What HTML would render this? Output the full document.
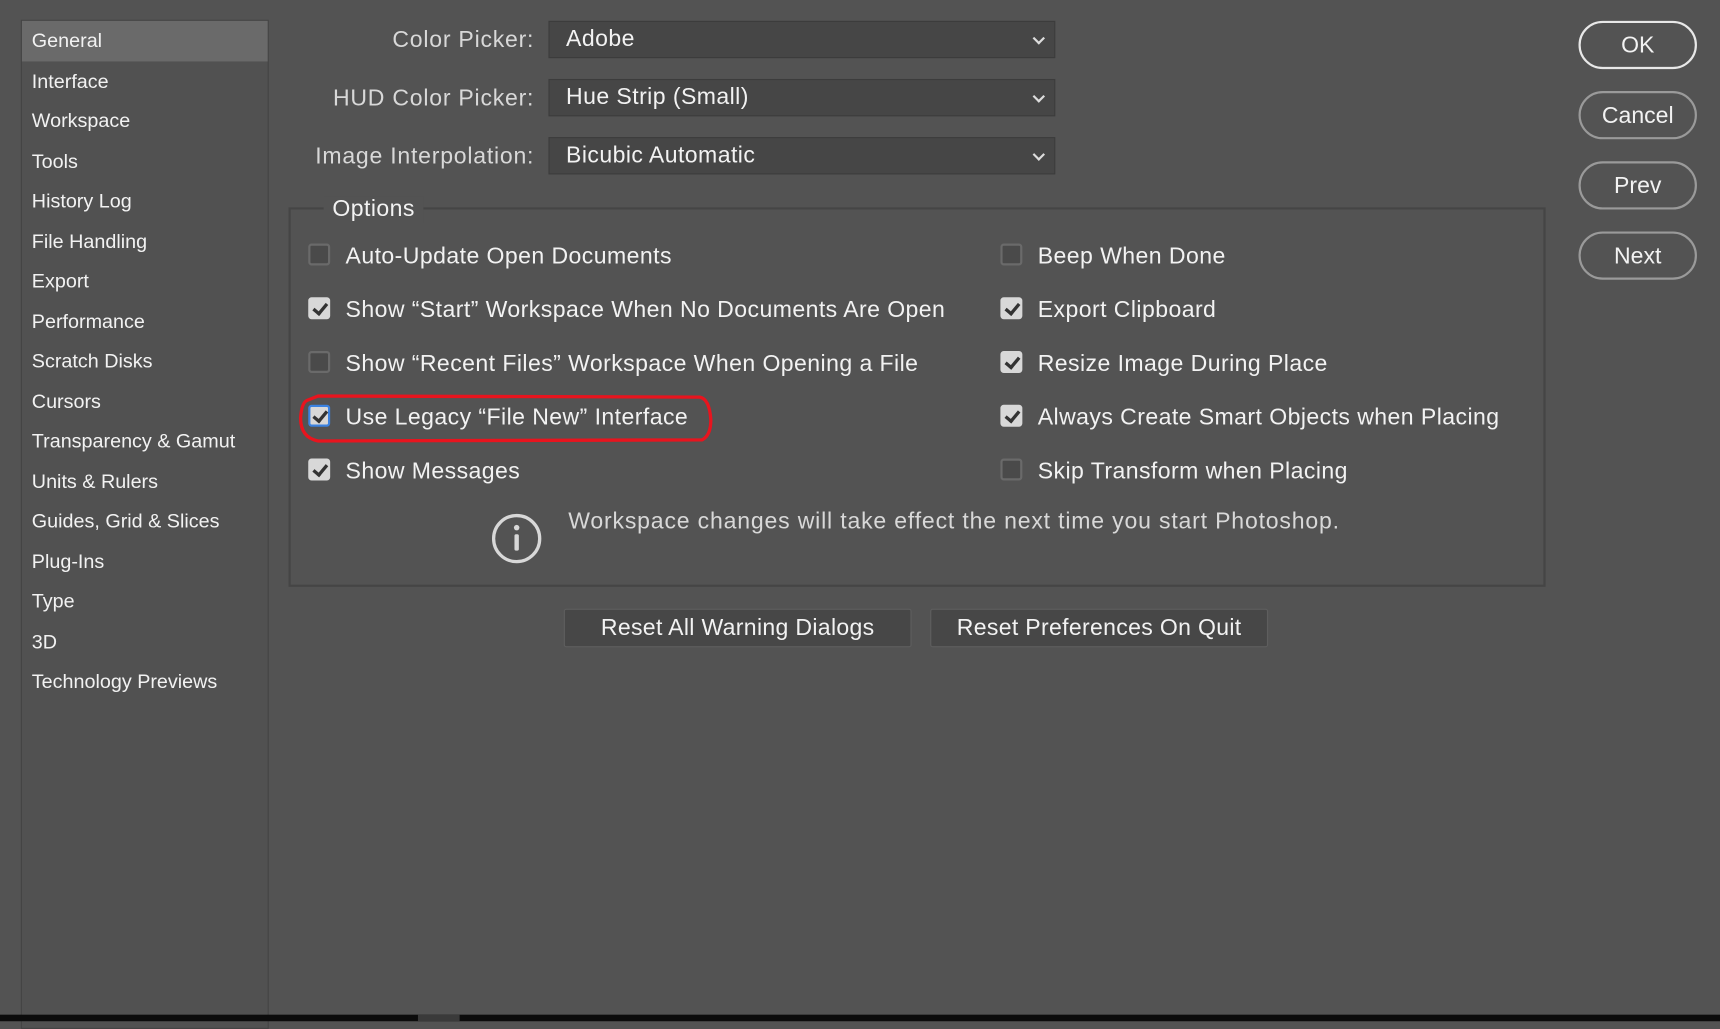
<!DOCTYPE html>
<html><head><style>
html,body{margin:0;padding:0;width:1720px;height:1020px;overflow:hidden;background:#535353;}
#w{position:absolute;left:0;top:0;width:1568px;height:930px;transform:scale(1.09694);transform-origin:0 0;font-family:"Liberation Sans",sans-serif;color:#f0f0f0;}
.a{position:absolute;white-space:nowrap;}
.side{position:absolute;left:19px;top:18px;width:226px;height:920px;background:#515151;border:1px solid #444;box-sizing:border-box;}
.side div{height:36.5px;line-height:36px;padding-left:9px;font-size:18px;color:#f2f2f2;}
.side .sel{background:#6a6a6a;}
.lbl{font-size:21px;color:#d8d8d8;text-align:right;width:230px;letter-spacing:0.7px;}
.dd{position:absolute;left:500px;width:462px;height:34px;background:#464646;border:1px solid #3c3c3c;box-sizing:border-box;font-size:21px;line-height:32px;padding-left:15px;color:#f2f2f2;letter-spacing:0.4px;}
.dd:after{content:"";position:absolute;right:10px;top:11px;width:6px;height:6px;border-right:2px solid #ddd;border-bottom:2px solid #ddd;transform:rotate(45deg);}
.cb{position:absolute;width:20px;height:20px;border:2px solid #6a6a6a;border-radius:3px;box-sizing:border-box;background:#4a4a4a;}
.cb.on{background:#d8d8d8;border-color:#d8d8d8;}
.cb.on:after{content:"";position:absolute;left:5px;top:1px;width:5px;height:10px;border-right:3px solid #333;border-bottom:3px solid #333;transform:rotate(40deg);}
.cb.blue{border-color:#3b82e0;}
.t{font-size:21px;color:#f2f2f2;letter-spacing:0.4px;}
.btn{position:absolute;border:2px solid #9a9a9a;border-radius:22px;width:108px;height:44px;box-sizing:border-box;text-align:center;line-height:42px;font-size:21px;color:#f2f2f2;}
.rb{position:absolute;top:555px;height:35px;background:#474747;border:1px solid #5e5e5e;border-radius:2px;box-sizing:border-box;font-size:21px;line-height:33px;text-align:center;color:#f2f2f2;letter-spacing:0.3px;}
</style></head><body><div id="w">
<div class="side">
<div class="sel">General</div><div>Interface</div><div>Workspace</div><div>Tools</div><div>History Log</div><div>File Handling</div><div>Export</div><div>Performance</div><div>Scratch Disks</div><div>Cursors</div><div>Transparency &amp; Gamut</div><div>Units &amp; Rulers</div><div>Guides, Grid &amp; Slices</div><div>Plug-Ins</div><div>Type</div><div>3D</div><div>Technology Previews</div>
</div>
<div class="a lbl" style="left:257px;top:25px">Color Picker:</div>
<div class="a lbl" style="left:257px;top:78px">HUD Color Picker:</div>
<div class="a lbl" style="left:257px;top:131px">Image Interpolation:</div>
<div class="dd" style="top:19px">Adobe</div>
<div class="dd" style="top:72px">Hue Strip (Small)</div>
<div class="dd" style="top:125px">Bicubic Automatic</div>
<div class="a" style="left:263px;top:189px;width:1146px;height:346px;border:2px solid #454545;box-sizing:border-box;"></div>
<div class="a t" style="left:295px;top:179px;background:#535353;padding:0 8px;">Options</div>

<div class="cb" style="left:281px;top:222px"></div><div class="a t" style="left:315px;top:222px">Auto-Update Open Documents</div>
<div class="cb on" style="left:281px;top:271px"></div><div class="a t" style="left:315px;top:271px">Show “Start” Workspace When No Documents Are Open</div>
<div class="cb" style="left:281px;top:320px"></div><div class="a t" style="left:315px;top:320px">Show “Recent Files” Workspace When Opening a File</div>
<div class="cb on blue" style="left:281px;top:369px"></div><div class="a t" style="left:315px;top:369px">Use Legacy “File New” Interface</div>
<div class="cb on" style="left:281px;top:418px"></div><div class="a t" style="left:315px;top:418px">Show Messages</div>

<div class="cb" style="left:912px;top:222px"></div><div class="a t" style="left:946px;top:222px">Beep When Done</div>
<div class="cb on" style="left:912px;top:271px"></div><div class="a t" style="left:946px;top:271px">Export Clipboard</div>
<div class="cb on" style="left:912px;top:320px"></div><div class="a t" style="left:946px;top:320px">Resize Image During Place</div>
<div class="cb on" style="left:912px;top:369px"></div><div class="a t" style="left:946px;top:369px">Always Create Smart Objects when Placing</div>
<div class="cb" style="left:912px;top:418px"></div><div class="a t" style="left:946px;top:418px">Skip Transform when Placing</div>

<svg class="a" style="left:270px;top:355px" width="384" height="52"><path d="M10 10 Q5 12 4 26 Q4 44 20 47 L370 46 Q378 42 378 28 Q377 9 368 7 L20 6 Z" fill="none" stroke="#e8141e" stroke-width="3"/></svg>

<svg class="a" style="left:447px;top:467px" width="48" height="48"><circle cx="24" cy="24" r="21" fill="none" stroke="#d8d8d8" stroke-width="3"/><circle cx="24" cy="14" r="2.5" fill="#d8d8d8"/><rect x="22" y="20" width="4" height="15" rx="1.5" fill="#d8d8d8"/></svg>
<div class="a t" style="left:518px;top:464px;color:#d8d8d8;letter-spacing:0.75px">Workspace changes will take effect the next time you start Photoshop.</div>

<div class="rb" style="left:514px;width:317px">Reset All Warning Dialogs</div>
<div class="rb" style="left:848px;width:308px">Reset Preferences On Quit</div>

<div class="btn" style="left:1439px;top:19px;border-color:#e8e8e8">OK</div>
<div class="btn" style="left:1439px;top:83px">Cancel</div>
<div class="btn" style="left:1439px;top:147px">Prev</div>
<div class="btn" style="left:1439px;top:211px">Next</div>

<div class="a" style="left:0;top:925px;width:1568px;height:6px;background:#0c0c0c"></div>
<div class="a" style="left:381px;top:925px;width:38px;height:6px;background:#3a3a3a"></div>
</div></body></html>
